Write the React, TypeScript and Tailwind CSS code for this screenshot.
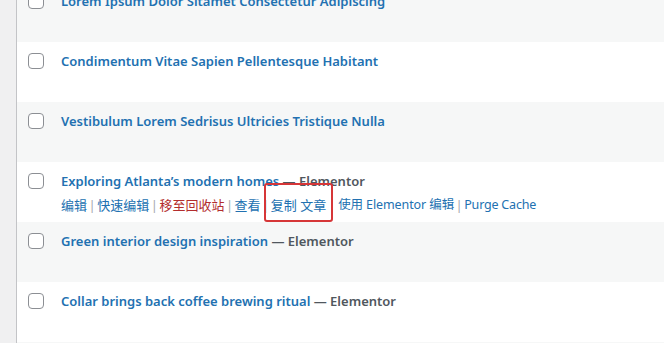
const font = "font-['Noto_Sans','Noto_Sans_CJK_SC',sans-serif]";

type Post = { title: string; elementor?: boolean; actions?: boolean };

const posts: Post[] = [
  { title: "Lorem Ipsum Dolor Sitamet Consectetur Adipiscing" },
  { title: "Condimentum Vitae Sapien Pellentesque Habitant" },
  { title: "Vestibulum Lorem Sedrisus Ultricies Tristique Nulla" },
  { title: "Exploring Atlanta’s modern homes", elementor: true, actions: true },
  { title: "Green interior design inspiration", elementor: true },
  { title: "Collar brings back coffee brewing ritual", elementor: true },
];

function Sep() {
  return <span className="mx-[1.5px] text-[#a7aaad]">|</span>;
}

function RowActions() {
  return (
    <div className="mt-[5px] flex items-center text-[13px] leading-[20px] text-[#2271b1]">
      <span>编辑</span>
      <Sep />
      <span>快速编辑</span>
      <Sep />
      <span className="text-[#b32d2e]">移至回收站</span>
      <Sep />
      <span>查看</span>
      <Sep />
      <span className="relative">
        复制 文章
        <span className="absolute -left-[7px] -right-[7px] -top-[12px] -bottom-[7px] rounded-[3px] border-2 border-[#d63638]" />
      </span>
      <span className="ml-[12px] text-[12.5px] tracking-[-0.1px]">使用 Elementor 编辑</span>
      <Sep />
      <span className="text-[12.5px] tracking-[-0.2px]">Purge Cache</span>
    </div>
  );
}

export default function App() {
  return (
    <div className={`${font} h-[343px] w-[664px] overflow-hidden bg-[#f0f0f1]`}>
      <div className="ml-[16px] border-l border-[#c3c4c7]">
        <div className="-mt-[18px]">
          {posts.map((p, i) => (
            <div
              key={i}
              className={`flex h-[60px] items-start pl-[11px] pt-[11px] ${
                i % 2 === 0 ? "bg-[#f6f7f7]" : "bg-white"
              }`}
            >
              <div className="h-[16px] w-[16px] shrink-0 rounded-[4px] border border-[#8c8f94] bg-white" />
              <div className="ml-[17px] -mt-[1px]">
                <div className="text-[13px] leading-[18px]">
                  <span className="font-semibold text-[#2271b1]">{p.title}</span>
                  {p.elementor && (
                    <span className="font-semibold text-[#50575e]"> — Elementor</span>
                  )}
                </div>
                {p.actions && <RowActions />}
              </div>
            </div>
          ))}
        </div>
        <div className="h-[2px] bg-[#f6f7f7]" />
      </div>
    </div>
  );
}
